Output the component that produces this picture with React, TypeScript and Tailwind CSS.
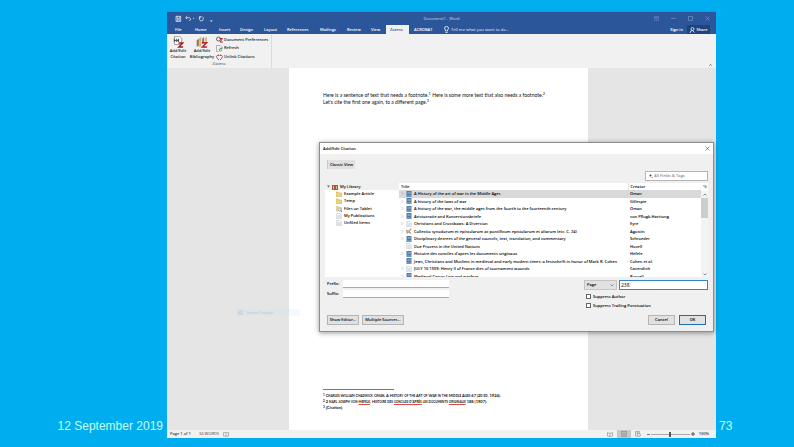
import { useState } from "react";
import clsx from "clsx";

const tabs = [
  { name: "File", width: "w-5" },
  { name: "Home", width: "w-6" },
  { name: "Insert", width: "w-[21px]" },
  { name: "Design", width: "w-6" },
  { name: "Layout", width: "w-[23px]" },
  { name: "References", width: "w-[33px]" },
  { name: "Mailings", width: "w-[27px]" },
  { name: "Review", width: "w-6" },
  { name: "View", width: "w-[15px]" },
  { name: "Zotero", width: "w-[23px]" },
  { name: "ACROBAT", width: "w-[30px]" },
];

const items = [
  { title: "A History of the art of war in the Middle Ages", creator: "Oman", icon: "book", open: true },
  { title: "A history of the laws of war", creator: "Gillespie", icon: "book", open: true },
  { title: "A history of the war, the middle ages from the fourth to the fourteenth century", creator: "Oman", icon: "book", open: true },
  { title: "Aristocratie and Konversionsbriefe", creator: "von Pflugk-Harttung", icon: "book", open: true },
  { title: "Christians and Crossbows: A Diversion", creator: "Eyre", icon: "page", open: true },
  { title: "Collectio synodorum et epistolarum ac pontificum epistolarum et aliarum (etc. C. 24)", creator: "Agustin", icon: "map", open: true },
  { title: "Disciplinary decrees of the general councils, text, translation, and commentary", creator: "Schroeder", icon: "book", open: true },
  { title: "Due Process in the United Nations", creator: "Hovell", icon: "page", open: false },
  { title: "Histoire des conciles d'apres les documents originaux", creator: "Hefele", icon: "book", open: true },
  { title: "Jews, Christians and Muslims in medieval and early modern times: a festschrift in honor of Mark R. Cohen", creator: "Cohen et al.", icon: "book", open: false },
  { title: "JULY 10 1559: Henry II of France dies of tournament wounds", creator: "Cavendish", icon: "page", open: true },
  { title: "Medieval Canon Law and warfare", creator: "Russell", icon: "book", open: true },
];

const folders = [
  { name: "Example Article", icon: "folder" },
  { name: "Temp", icon: "folder" },
  { name: "Files on Tablet", icon: "search" },
  { name: "My Publications", icon: "page" },
  { name: "Unfiled Items", icon: "page" },
];

const ItemIcon = ({ kind }: { kind: string }) => {
  if (kind === "book") {
    return (
      <svg viewBox="0 0 12 12" className="h-[6px] w-[6px] shrink-0">
        <rect x="1" y="0" width="10" height="12" rx="1" fill="#4f7ba6" />
        <path d="M3 3h7M3 5h7" stroke="#a5c2dc" />
        <path d="M2 10h9" stroke="#dce8f2" />
      </svg>
    );
  }
  if (kind === "map") {
    return (
      <svg viewBox="0 0 12 12" className="h-[6px] w-[6px] shrink-0">
        <path d="M1 4l4 2 5-5-3 6 3 4-5-2-3 2z" fill="#d8b59a" stroke="#9b6848" />
      </svg>
    );
  }
  if (kind === "folder") {
    return (
      <svg viewBox="0 0 12 12" className="h-[6px] w-[6px] shrink-0">
        <path d="M0 2h5l1 2h6v7H0z" fill="#ecd27c" stroke="#cfae55" />
      </svg>
    );
  }
  if (kind === "search") {
    return (
      <svg viewBox="0 0 12 12" className="h-[6px] w-[6px] shrink-0">
        <path d="M0 1h5l1 2h5v7H0z" fill="#ecd995" stroke="#cdb56d" />
        <circle cx="7" cy="7" r="3" fill="#dce9f2" stroke="#7f98aa" />
        <path d="M9 9l3 3" stroke="#667b8c" strokeWidth="2" />
      </svg>
    );
  }
  return (
    <svg viewBox="0 0 12 12" className="h-[6px] w-[6px] shrink-0">
      <path d="M1.5.5h6l3 3v8h-9z" fill="#f7f9fb" stroke="#a9b4be" />
      <path d="M3 5h6M3 7h6M3 9h6" stroke="#c1cad2" />
    </svg>
  );
};

const TitleBar = () => (
  <div className="grid h-[14px] grid-cols-[1fr_auto_1fr] items-center border-t border-[#5f7fa8] text-[#a9bcdc]">
    <svg viewBox="0 0 120 24" className="ml-2 h-2 w-10" fill="none" stroke="#fff" strokeWidth="2">
      <path d="M3 4h14v15H3zM6 4v6h8V4M7 19v-5h6v5" />
      <path d="M37 3l-5 5 5 5M33 8h10q5 1 3 7l-3 3M54 10h4" />
      <path d="M76 6q-6 9 1 12 8 1 8-7 0-4-3-6M80 5h-7v7" />
      <path d="M106 17h6l-3 3z" fill="#fff" strokeWidth="1" />
    </svg>
    <span className="pt-px">Document1 - Word</span>
    <div className="flex items-center justify-end gap-3 pr-[6px]">
      <button aria-label="Ribbon display options">
        <svg viewBox="0 0 10 10" className="h-[5px] w-[5px]" fill="none" stroke="#6f8fc2"><path d="M1 1h8v8H1zM1 3h8M5 8V5M3 6l2-2 2 2" /></svg>
      </button>
      <button aria-label="Minimize">
        <svg viewBox="0 0 10 10" className="h-[5px] w-[5px]" stroke="#6f8fc2" strokeWidth="1.500"><path d="M0 5h9" /></svg>
      </button>
      <button aria-label="Restore">
        <svg viewBox="0 0 10 10" className="h-[5px] w-[5px]" fill="none" stroke="#6f8fc2" strokeWidth="1.500"><path d="M1 1h8v8H1z" /></svg>
      </button>
      <button aria-label="Close">
        <svg viewBox="0 0 10 10" className="h-[5px] w-[5px]" stroke="#6f8fc2" strokeWidth="1.500"><path d="M1 1l8 8M9 1L1 9" /></svg>
      </button>
    </div>
  </div>
);

const TabBar = () => (
  <nav className="flex h-[9px] items-stretch pl-2 leading-[9px] text-white">
    {tabs.map((tab) => (
      <button
        key={tab.name}
        className={clsx(
          "shrink-0 whitespace-nowrap text-left",
          tab.width,
          tab.name === "Zotero" && "mr-[5px] bg-[#f1f1f1] pl-1 text-[#1f4a8c]",
        )}
      >
        {tab.name}
      </button>
    ))}
    <svg viewBox="0 0 10 14" className="mt-px h-[7px] w-[5px] shrink-0" fill="none" stroke="#fff" strokeWidth="1.500">
      <path d="M3 10V8Q1 6 1 4q0-3 4-3t4 3q0 2-2 4v2zM3 13h4" />
    </svg>
    <span className="ml-[2px] whitespace-nowrap text-[#c3d2ea]">Tell me what you want to do...</span>
    <button className="mr-1 ml-auto whitespace-nowrap">Sign in</button>
    <button className="mr-[6px] flex w-[23px] items-center justify-center gap-px bg-[#1c4480]">
      <svg viewBox="0 0 12 12" className="h-[6px] w-[6px]" fill="none" stroke="#fff" strokeWidth="1.500">
        <circle cx="7" cy="4" r="3" />
        <path d="M2 12q0-5 5-5l4 4" />
      </svg>
      Share
    </button>
  </nav>
);

const Ribbon = () => (
  <div className="flex h-[34px] bg-[#f1f1f1] text-[#222]">
    <div className="flex w-[105px] flex-col border-r border-[#dcdcdc] pt-[2px]">
      <div className="flex gap-px">
        <button className="flex w-[22px] flex-col items-center">
          <svg viewBox="0 0 30 34" className="h-3 w-[11px]" fill="none">
            <path d="M4 1h14l6 6v17H4z" fill="#fff" stroke="#777" strokeWidth="2" />
            <path d="M3 8v9M10 8v9M3 13h12M15 8v9" stroke="#555" strokeWidth="3" />
            <path d="M15 20h12L16 31h12" stroke="#a51b24" strokeWidth="4" />
          </svg>
          <span className="text-center leading-[6px]">Add/Edit<br />Citation</span>
        </button>
        <button className="flex w-6 flex-col items-center">
          <svg viewBox="0 0 34 34" className="h-3 w-3" fill="none">
            <path d="M2 12l6-4v20l-6 2z" fill="#92764b" />
            <path d="M9 6l6-3v26l-6 2z" fill="#d8b46d" />
            <path d="M17 8l6-5v18h-6z" fill="#858585" />
            <path d="M25 5l6-2v13h-6z" fill="#d7b982" />
            <path d="M17 19h13L18 31h13" stroke="#b91f29" strokeWidth="4" />
          </svg>
          <span className="text-center leading-[6px]">Add/Edit<br />Bibliography</span>
        </button>
        <div className="flex flex-col gap-px pl-px">
          <button className="flex h-[7px] items-center gap-px whitespace-nowrap">
            <svg viewBox="0 0 14 14" className="h-[7px] w-[7px]" fill="none" strokeWidth="2">
              <circle cx="5" cy="6" r="4" stroke="#666" /><path d="M7 5h6l-5 7h6" stroke="#b32530" />
            </svg>
            Document Preferences
          </button>
          <button className="flex h-2 items-center gap-px whitespace-nowrap">
            <svg viewBox="0 0 14 14" className="h-[7px] w-[7px]" fill="none" strokeWidth="1.500">
              <path d="M11 4L8 1H1v12h4" stroke="#999" /><path d="M12 7q-5-2-6 3 2 4 6 1M12 4v4H8" stroke="#3a9657" />
            </svg>
            Refresh
          </button>
          <button className="flex h-2 items-center gap-px whitespace-nowrap">
            <svg viewBox="0 0 14 14" className="h-[7px] w-[7px]" fill="none" strokeWidth="2">
              <path d="M6 3Q1 2 1 5t5 7M8 3q5-1 5 2t-5 7" stroke="#8b6658" /><path d="M5 1l1 2M9 1L8 3" stroke="#c34242" />
            </svg>
            Unlink Citations
          </button>
        </div>
      </div>
      <span className="text-center leading-[6px] text-[#666]">Zotero</span>
    </div>
    <button aria-label="Collapse ribbon" className="mt-auto mr-1 mb-[2px] ml-auto">
      <svg viewBox="0 0 8 5" className="h-[2px] w-[3px]" fill="none" stroke="#444" strokeWidth="2"><path d="M1 4l3-3 3 3" /></svg>
    </button>
  </div>
);

const dialogButton = "h-[10px] border border-[#b5b5b5] bg-[#e1e1e1] text-center leading-[8px] whitespace-nowrap";

const CitationDialog = () => {
  const [prefix, setPrefix] = useState<string>("");
  const [suffix, setSuffix] = useState<string>("");
  const [page, setPage] = useState<string>("238");

  return (
    <section
      role="dialog"
      aria-label="Add/Edit Citation"
      className="absolute top-[74px] right-[2px] left-[152px] border border-[#8c8c8c] bg-[#f0f0f0] text-black shadow-[0_1px_5px_rgba(0,0,0,0.4)]"
    >
      <header className="flex h-[11px] items-center justify-between bg-white pr-[3px] pl-[3px]">
        <h2>Add/Edit Citation</h2>
        <button aria-label="Close dialog">
          <svg viewBox="0 0 10 10" className="h-[5px] w-[5px]" stroke="#333"><path d="M1 1l8 8M9 1L1 9" /></svg>
        </button>
      </header>
      <div className="px-[5px] pt-[6px] pb-[6px]">
        <button className="ml-[2px] block h-[9px] w-7 border-l border-[#c8c8c8] bg-[#e1e1e1] leading-[9px] whitespace-nowrap">Classic View</button>
        <div className="mt-[2px] flex justify-end">
          <label className="flex h-[10px] w-[63px] items-center border border-[#b5b5b5] bg-white pl-[3px]">
            <svg viewBox="0 0 8 8" className="mr-px h-1 w-1" fill="#444"><circle cx="3" cy="3" r="2" /><path d="M5 6h3L6 8z" /></svg>
            <input aria-label="Search" placeholder="All Fields & Tags" className="min-w-0 flex-1 outline-none placeholder:text-[#888]" />
          </label>
        </div>

        <div className="mt-[2px] flex h-[94px]">
          <div className="w-[74px] shrink-0 bg-white">
            <ul className="grid h-[44px] grid-rows-6">
              <li className="flex items-center gap-[2px] bg-[#efefef] pl-[2px]">
                <svg viewBox="0 0 6 6" className="h-[3px] w-[3px]" fill="#666"><path d="M0 1h6L3 5z" /></svg>
                <svg viewBox="0 0 12 12" className="h-[6px] w-[6px]">
                  <path d="M0 2h12v10H0z" fill="#96633b" /><path d="M2 4h2v6H2zM8 4h2v6H8z" fill="#dfbb7b" /><path d="M5 4h2v6H5z" fill="#c84339" />
                </svg>
                My Library
              </li>
              {folders.map((folder) => (
                <li key={folder.name} className="flex items-center gap-[2px] pl-[11px]">
                  <ItemIcon kind={folder.icon} />
                  {folder.name}
                </li>
              ))}
            </ul>
          </div>
          <div className="flex min-w-0 flex-1 overflow-hidden bg-white">
            <table className="h-[97px] w-full table-fixed border-collapse leading-[7px]">
              <colgroup>
                <col />
                <col className="w-[73px]" />
              </colgroup>
              <thead>
                <tr className="text-left">
                  <th className="py-0 pl-[2px] font-semibold">Title</th>
                  <th className="border-l border-[#ddd] py-0 pl-[2px] font-semibold">Creator</th>
                </tr>
              </thead>
              <tbody>
                {items.map((item, index) => (
                  <tr key={item.title} className={clsx(index === 0 && "bg-[#d9d9d9]")}>
                    <td className="p-0">
                      <div className="flex items-center gap-[2px] whitespace-nowrap pl-[2px]">
                        <svg viewBox="0 0 6 6" className="h-[3px] w-[3px] shrink-0" fill="none" stroke="#999">
                          {item.open && <path d="M1 0l3 3-3 3" />}
                        </svg>
                        <ItemIcon kind={item.icon} />
                        {item.title}
                      </div>
                    </td>
                    <td className="truncate py-0 pr-0 pl-[2px]">{item.creator}</td>
                  </tr>
                ))}
              </tbody>
            </table>
            <div className="flex w-[7px] shrink-0 flex-col items-center">
              <svg viewBox="0 0 10 10" className="my-[2px] h-1 w-[5px]" fill="none" stroke="#555" strokeWidth="1.500"><path d="M1 2h8v6M5 5h4" /></svg>
              <div className="flex w-full flex-1 flex-col items-center justify-between bg-[#f3f3f3] pb-px">
                <div className="flex w-full flex-col items-center">
                  <svg viewBox="0 0 8 6" className="my-[2px] h-[3px] w-1" fill="none" stroke="#666" strokeWidth="1.500"><path d="M1 5l3-3 3 3" /></svg>
                  <div className="h-5 w-full bg-[#cdcdcd]" />
                </div>
                <svg viewBox="0 0 8 6" className="h-[3px] w-1" fill="none" stroke="#666" strokeWidth="1.500"><path d="M1 1l3 3 3-3" /></svg>
              </div>
            </div>
          </div>
        </div>

        <div className="mt-[3px] flex justify-between pl-[2px]">
          <div className="flex flex-col gap-[2px]">
            <label className="flex items-center">
              <span className="w-4">Prefix:</span>
              <input value={prefix} onChange={(e) => setPrefix(e.target.value)} className="h-2 w-[106px] border-b border-[#aaa] bg-white" />
            </label>
            <label className="flex items-center">
              <span className="w-4">Suffix:</span>
              <input value={suffix} onChange={(e) => setSuffix(e.target.value)} className="h-2 w-[106px] border-b border-[#aaa] bg-white" />
            </label>
          </div>
          <div className="flex w-[124px] flex-col gap-1">
            <div className="flex gap-[2px]">
              <div className="grid w-[33px] items-center border border-[#c4c4c4] bg-[#e1e1e1]">
                <select aria-label="Locator" className="col-start-1 row-start-1 appearance-none pl-[2px] leading-[8px]">
                  <option>Page</option>
                  <option>Chapter</option>
                </select>
                <svg viewBox="0 0 8 6" className="pointer-events-none col-start-1 row-start-1 mr-[2px] h-[3px] w-1 justify-self-end" fill="none" stroke="#444"><path d="M1 1l3 3 3-3" /></svg>
              </div>
              <input
                aria-label="Locator value"
                value={page}
                onChange={(e) => setPage(e.target.value)}
                className="h-[10px] min-w-0 flex-1 border border-[#2f86c5] bg-white pl-px text-[5px] font-normal outline-none"
              />
            </div>
            <label className="flex h-[5px] items-center gap-[2px] pl-[2px]">
              <input type="checkbox" className="h-[5px] w-[5px] appearance-none border border-[#666] bg-white" />
              Suppress Author
            </label>
            <label className="flex h-[5px] items-center gap-[2px] pl-[2px]">
              <input type="checkbox" className="h-[5px] w-[5px] appearance-none border border-[#666] bg-white" />
              Suppress Trailing Punctuation
            </label>
          </div>
        </div>

        <footer className="mt-[7px] flex gap-[3px] pr-[2px] pl-[2px]">
          <button className={clsx(dialogButton, "w-8")}>Show Editor...</button>
          <button className={clsx(dialogButton, "w-[42px]")}>Multiple Sources...</button>
          <button className={clsx(dialogButton, "ml-auto w-[27px]")}>Cancel</button>
          <button className="ml-px h-[10px] w-[27px] border border-[#1d6fb5] bg-[#e1e1e1] leading-[8px]">OK</button>
        </footer>
      </div>
    </section>
  );
};

const misspelt = "underline decoration-[#dd4a4a] decoration-1 underline-offset-1";

const DocumentPage = () => (
  <article className="flex flex-col bg-white px-[34px] pt-[24px] pb-[19px] font-[Lato,sans-serif] text-[5px] leading-[7px] font-normal whitespace-nowrap text-[#111]">
    <p>
      Here is a sentence of text that needs a footnote.<sup className="text-[4px]">1</sup> Here is some more text that also needs a footnote.<sup className="text-[4px]">2</sup>
      <br />
      Let's cite the first one again, to a different page.<sup className="text-[4px]">3</sup>
    </p>
    <div className="mt-auto w-[71px] border-t border-[#777] pt-[3px]" />
    <ol className="text-[4px] leading-[6px] font-bold [font-variant-caps:small-caps]">
      <li><sup>1</sup> Charles William Chadwick Oman, A History of the Art of War in the Middle Ages 67 (2d ed. 1924).</li>
      <li>
        <sup>2</sup> 2 Karl Joseph von <span className={misspelt}>Hefele</span>, Histoire des <span className={misspelt}>conciles d'après</span> les documents <span className={misspelt}>originaux</span> 188 (1907).
      </li>
      <li className="[font-variant-caps:normal]"><sup>3</sup> {"{Citation}"}</li>
    </ol>
  </article>
);

const StatusBar = () => (
  <footer className="flex h-2 items-center bg-[#f1f1f1] pr-[7px] pl-[3px] text-[#444]">
    <span className="w-[29px]">Page 1 of 1</span>
    <span className="w-6 font-normal">34 WORDS</span>
    <svg viewBox="0 0 12 10" className="h-[5px] w-[6px]" fill="none" stroke="#777"><path d="M1 1h4l1 1 1-1h4v7H7L6 9 5 8H1zM6 2v7" /></svg>
    <button aria-label="Read mode" className="mr-1 ml-auto">
      <svg viewBox="0 0 12 10" className="h-[5px] w-[6px]" fill="none" stroke="#777"><path d="M1 1l5 2 5-2v7L6 9 1 8zM6 3v6" /></svg>
    </button>
    <button aria-label="Print layout" className="flex h-2 w-[14px] items-center justify-center bg-[#c8c8c8]">
      <svg viewBox="0 0 12 12" className="h-[6px] w-[6px]" fill="none" stroke="#777"><path d="M1 1h10v10H1zM3 4h6M3 6h6M3 8h6" /></svg>
    </button>
    <button aria-label="Web layout" className="mr-[6px] ml-1">
      <svg viewBox="0 0 12 12" className="h-[6px] w-[6px]" fill="none" stroke="#777"><path d="M1 1h8v4M1 1v9h4M3 3h4M3 5h3" /><circle cx="8" cy="8" r="3" /></svg>
    </button>
    <button aria-label="Zoom out" className="mr-px h-px w-[3px] bg-[#777]" />
    <input
      type="range"
      aria-label="Zoom"
      defaultValue={50}
      className="h-[5px] w-[39px] appearance-none bg-[linear-gradient(#aaa,#aaa)] bg-[length:100%_1px] bg-center bg-no-repeat [&::-webkit-slider-thumb]:h-[5px] [&::-webkit-slider-thumb]:w-[2px] [&::-webkit-slider-thumb]:appearance-none [&::-webkit-slider-thumb]:bg-[#555]"
    />
    <button aria-label="Zoom in" className="mr-1 ml-px">
      <svg viewBox="0 0 8 8" className="h-1 w-1" stroke="#555" strokeWidth="2"><path d="M0 4h8M4 0v8" /></svg>
    </button>
    <span>100%</span>
  </footer>
);

const App = () => (
  <div className="grid min-h-screen grid-cols-[167fr_549fr_78fr] bg-[#00aeef] pt-[11px] pb-[9px] font-['Liberation_Sans',sans-serif] text-xs text-[#c4fff0]">
    <p className="self-end pr-1 pb-1 text-right whitespace-nowrap">12 September 2019</p>
    <main className="flex min-w-0 flex-col font-['Open_Sans',sans-serif] text-[4px] leading-[6px] font-semibold">
      <div className="bg-[#2b579a]">
        <TitleBar />
        <TabBar />
      </div>
      <Ribbon />
      <div className="relative grid flex-1 grid-cols-[122fr_299fr_128fr] bg-[#e5e5e5]">
        <div />
        <DocumentPage />
        <div className="absolute top-[241px] left-[69px] flex h-[7px] w-16 items-center gap-[4px] bg-sky-200/20 pl-[2px] font-normal text-slate-400/60">
          <span className="h-[5px] w-[5px] bg-slate-400/20" />
          Insert Citation
        </div>
        <CitationDialog />
      </div>
      <StatusBar />
    </main>
    <p className="self-end pb-1 pl-[3px]">73</p>
  </div>
);

export default App;
